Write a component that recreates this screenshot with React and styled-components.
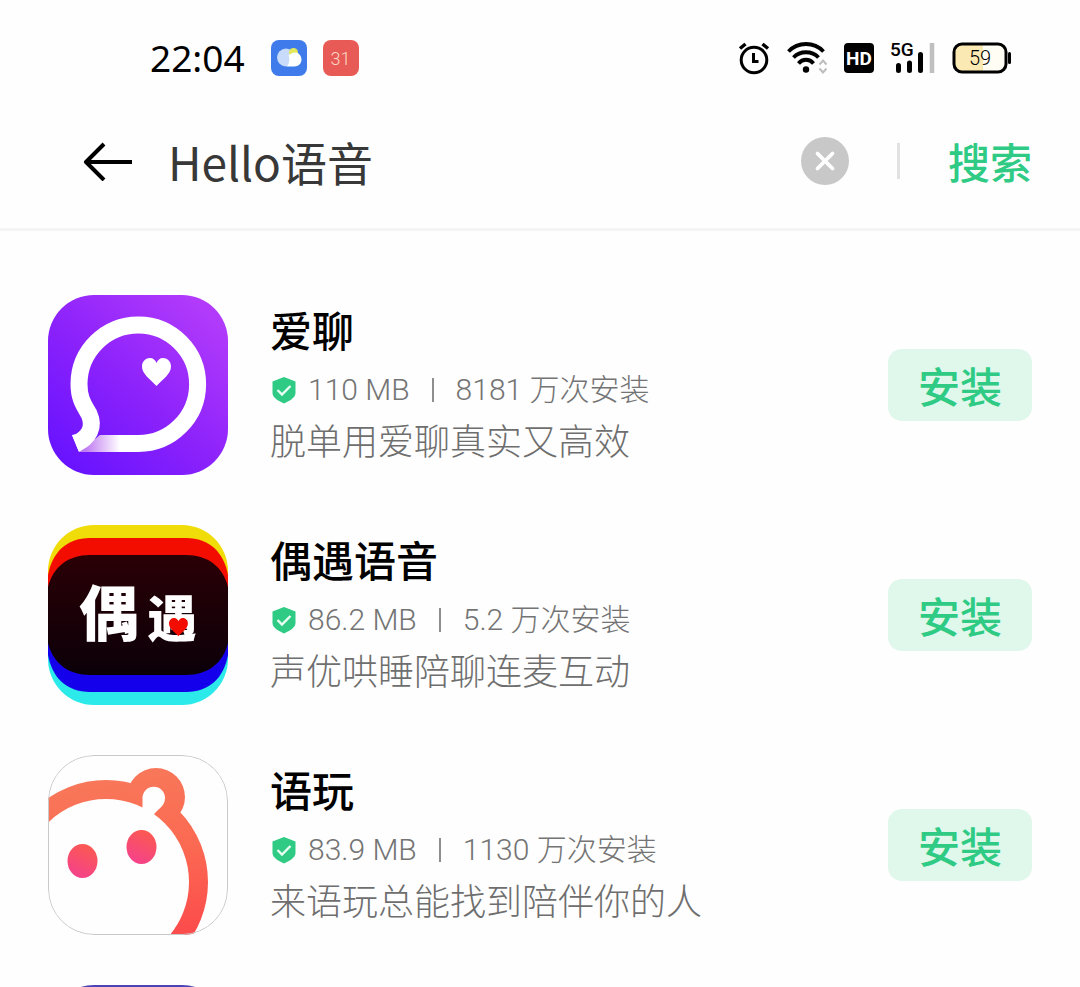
import React, { useState } from "react";
import styled, { createGlobalStyle } from "styled-components";

const GlobalStyle = createGlobalStyle`
*{
box-sizing:border-box;
}
body{
margin:0;
background-color:#fefefe;
font-family:Roboto, "Noto Sans CJK SC", sans-serif;
}
`

const Page = styled.div`
height:100vh;
overflow:hidden;
display:flex;
flex-direction:column;
`

const StatusBar = styled.div`
display:flex;
align-items:center;
justify-content:space-between;
flex-shrink:0;
height:116px;
padding:0 68px 0 150px;
`

const StatusGroup = styled.div`
display:flex;
align-items:center;
gap:${props => props.$gap}px;
`

const Clock = styled.span`
font-family:"Noto Sans", sans-serif;
font-size:37px;
line-height:44px;
color:#000;
margin-right:10px;
`

const Badge = styled.span`
display:flex;
align-items:center;
justify-content:center;
width:36px;
height:36px;
border-radius:8px;
background-color:${props => props.$color};
color:#fbd9c8;
font-size:18px;
font-weight:300;
`

const SearchBar = styled.form`
display:flex;
align-items:center;
flex-shrink:0;
height:115px;
padding:0 48px 22px 80px;
border-bottom:3px solid #f4f4f4;
`

const IconButton = styled.button`
display:flex;
flex-shrink:0;
padding:0;
border:0;
background:none;
`

const SearchInput = styled.input`
flex:1;
min-width:0;
height:72px;
margin-left:34px;
padding:0;
border:0;
outline:0;
background:none;
color:#383838;
font-family:"Noto Sans CJK SC", sans-serif;
font-size:46px;
`

const Divider = styled.span`
width:3px;
height:36px;
margin:0 48px;
background-color:#e2e2e2;
`

const SearchButton = styled.button`
padding:0;
border:0;
background:none;
color:#2fcb85;
font-family:"Noto Sans CJK SC", sans-serif;
font-size:42px;
font-weight:500;
line-height:60px;
`

const List = styled.ul`
display:flex;
flex-direction:column;
gap:50px;
margin:0;
padding:64px 48px 0;
list-style:none;
`

const Row = styled.li`
display:flex;
align-items:center;
flex-shrink:0;
height:180px;
`

const AppIcon = styled.svg`
flex-shrink:0;
width:180px;
height:180px;
border-radius:46px;
`

const Info = styled.div`
flex:1;
min-width:0;
margin-left:42px;
padding-top:2px;
`

const Name = styled.h2`
margin:0;
color:#000;
font-size:42px;
font-weight:500;
line-height:58px;
`

const Meta = styled.div`
display:flex;
align-items:center;
height:56px;
padding-left:2px;
color:#747474;
font-size:30px;
font-weight:300;
line-height:56px;
`

const Size = styled.span`
margin-left:12px;
`

const Bar = styled.span`
width:2px;
height:24px;
margin:0 22px;
background-color:#8e8e8e;
`

const Slogan = styled.p`
margin:0;
color:#6e6e6e;
font-size:36px;
font-weight:300;
line-height:50px;
`

const InstallButton = styled.button`
flex-shrink:0;
width:144px;
height:72px;
padding:0;
border:0;
border-radius:14px;
background-color:#e0f7eb;
color:#2fcb85;
font-family:"Noto Sans CJK SC", sans-serif;
font-size:42px;
font-weight:500;
line-height:72px;
`

const HEART = "M14.5 28C8 21 0 16 0 8.500C0 3 4 0 8 0C11 0 13.500 2 14.500 5C15.500 2 18 0 21 0C25 0 29 3 29 8.500C29 16 21 21 14.500 28Z"

const WeatherIcon = () => (
    <svg width="36" height="36" viewBox="0 0 36 36" aria-hidden="true">
        <circle cx="15" cy="17.500" r="9" fill="#c9dbfb" />
        <circle cx="22.500" cy="12.500" r="4.500" fill="#e3e95c" />
        <path d="M17.500 15C20 14 21 12.500 24 12.500C28 12.500 30.500 16 30.500 19.500C30.500 23.500 27.500 26.500 23.500 26.500H16C18.500 23 19 19 17.500 15Z" fill="#fdfefe" />
    </svg>
)

const AlarmIcon = () => (
    <svg width="32" height="34" viewBox="0 0 32 34" fill="none" stroke="#000" aria-hidden="true">
        <circle cx="16" cy="19" r="12.800" strokeWidth="3" />
        <path d="M15.500 12v8.500h5" strokeWidth="3" />
        <path d="M2 7.500L7.500 3M30 7.500L24.500 3" strokeWidth="3.500" />
    </svg>
)

const WifiIcon = () => (
    <svg width="40" height="32" viewBox="0 0 40 32" fill="none" stroke="#000" aria-hidden="true">
        <path d="M1.500 9.500C11-.5 27-.5 36.500 9.500" strokeWidth="3.800" />
        <path d="M6.500 15.500C13 8.500 25 8.500 31.500 15.500" strokeWidth="3.800" />
        <path d="M11.500 21.500C15.500 16.500 22.500 16.500 26.500 21.500" strokeWidth="3.800" />
        <circle cx="19" cy="27.500" r="3.200" fill="#000" stroke="none" />
        <path d="M32.500 22.500l3.500-4 3.500 4M32.500 26.500l3.500 4 3.500-4" stroke="#bdbdbd" strokeWidth="2" />
    </svg>
)

const HdIcon = () => (
    <svg width="30" height="30" viewBox="0 0 30 30" aria-hidden="true">
        <rect width="30" height="30" rx="4" fill="#000" />
        <text x="15" y="22" textAnchor="middle" fill="#fff" fontFamily="Roboto, sans-serif" fontSize="19" fontWeight="700">HD</text>
    </svg>
)

const SignalIcon = () => (
    <svg width="44" height="44" viewBox="0 -6 44 44" aria-hidden="true">
        <text x="-1" y="14" fontFamily="Roboto, sans-serif" fontSize="19" fontWeight="500">5G</text>
        <path d="M7.500 23.500v5M18.500 21v7.500M29.500 12.500v16" stroke="#000" strokeWidth="5" strokeLinecap="round" />
        <path d="M41 1v30" stroke="#bfbfbf" strokeWidth="4.500" />
    </svg>
)

const BatteryIcon = () => (
    <svg width="60" height="32" viewBox="0 0 60 32" aria-hidden="true">
        <rect x="2" y="2" width="52" height="28" rx="8" fill="#fffdf4" />
        <path d="M10 2H31V30H10A8 8 0 0 1 2 22V10A8 8 0 0 1 10 2Z" fill="#fbe9b4" />
        <rect x="2" y="2" width="52" height="28" rx="8" fill="none" stroke="#000" strokeWidth="3" />
        <path d="M57.500 11.500v9" stroke="#000" strokeWidth="3" strokeLinecap="round" />
        <text x="28" y="23" textAnchor="middle" fontFamily="Roboto, sans-serif" fontSize="20" fontWeight="300">59</text>
    </svg>
)

const BackIcon = () => (
    <svg width="54" height="40" viewBox="0 0 54 40" fill="none" stroke="#000" strokeWidth="4" aria-hidden="true">
        <path d="M52 21H6M24 3L6 21L24 39" strokeLinejoin="round" />
    </svg>
)

const ClearIcon = () => (
    <svg width="48" height="48" viewBox="0 0 48 48" aria-hidden="true">
        <circle cx="24" cy="24" r="24" fill="#c8c8c8" />
        <path d="M16.500 16.500l15 15M31.500 16.500l-15 15" stroke="#fff" strokeWidth="3.800" strokeLinecap="round" />
    </svg>
)

const ShieldIcon = () => (
    <svg width="24" height="28" viewBox="1 0 24 28" aria-hidden="true">
        <path d="M13 1L24.500 5.500V17C24.500 22 18 25 13 27.500C8 25 1.500 22 1.500 17V5.500Z" fill="#2fcb85" />
        <path d="M6.500 14l4.500 4.500 8.500-8.500" fill="none" stroke="#e9fff4" strokeWidth="2.400" />
    </svg>
)

const BubbleLogo = () => (
    <AppIcon viewBox="0 0 180 180" aria-hidden="true">
        <defs>
            <linearGradient id="violet" x1="0.1" y1="1" x2="0.9" y2="0.1">
                <stop offset="0" stopColor="#6512ff" />
                <stop offset="0.5" stopColor="#8c22fb" />
                <stop offset="1" stopColor="#b23bfb" />
            </linearGradient>
            <linearGradient id="fold" gradientUnits="userSpaceOnUse" x1="38" y1="0" x2="72" y2="0">
                <stop offset="0" stopColor="#c07df2" />
                <stop offset="1" stopColor="#fff" />
            </linearGradient>
        </defs>
        <rect width="180" height="180" fill="url(#violet)" />
        <path d="M31 157L52 140H90V157Z" fill="url(#fold)" />
        <path d="M72 148.500H90A59.300 59.300 0 1 0 31 89C31 104 36 110 41 119C47 132 41 143 27.500 148.500" fill="none" stroke="#fff" strokeWidth="17" />
        <path d="M24 140L31 157L40 151L34 138Z" fill="#fff" />
        <path d={HEART} fill="#fff" transform="translate(94 63)" />
    </AppIcon>
)

const StripeLogo = () => (
    <AppIcon viewBox="0 0 180 180" role="img" aria-label="偶遇">
        <defs>
            <linearGradient id="night" x1="0" y1="0" x2="0" y2="1">
                <stop offset="0" stopColor="#2a0006" />
                <stop offset="1" stopColor="#0b0008" />
            </linearGradient>
        </defs>
        <rect width="180" height="90" fill="#f0dc08" />
        <rect y="90" width="180" height="90" fill="#2deaea" />
        <path d="M0 90V50C4 28 18 13 42 13H138C162 13 176 28 180 50V90Z" fill="#f20d00" />
        <path d="M0 90V130C4 152 18 167 42 167H138C162 167 176 152 180 130V90Z" fill="#1400ea" />
        <path d="M0 62C5 42 20 30 42 30H138C160 30 175 42 180 62V118C175 138 160 150 138 150H42C20 150 5 138 0 118Z" fill="url(#night)" />
        <g fill="#fff" fontFamily='"Noto Sans CJK SC", sans-serif' fontWeight="900">
            <text x="31" y="111" fontSize="60">偶</text>
            <text x="99" y="112" fontSize="50">遇</text>
        </g>
        <path d={HEART} fill="#f20d00" transform="translate(121 93) scale(0.65)" />
    </AppIcon>
)

const BearLogo = () => (
    <AppIcon viewBox="0 0 180 180" aria-hidden="true">
        <defs>
            <linearGradient id="coral" gradientUnits="userSpaceOnUse" x1="90" y1="10" x2="120" y2="180">
                <stop offset="0" stopColor="#f8785a" />
                <stop offset="0.5" stopColor="#fb6a52" />
                <stop offset="1" stopColor="#fc4c4c" />
            </linearGradient>
            <linearGradient id="eye" x1="0.3" y1="1" x2="0.7" y2="0">
                <stop offset="0" stopColor="#f5418c" />
                <stop offset="1" stopColor="#fb5a50" />
            </linearGradient>
        </defs>
        <rect width="180" height="180" fill="#fefefe" />
        <circle cx="108" cy="42" r="29" fill="url(#coral)" />
        <circle cx="58" cy="127" r="92.500" fill="#fefefe" stroke="url(#coral)" strokeWidth="19" />
        <path d="M94.500 56V43A11.200 11.200 0 0 1 117 43C117 52 109 54 105 61Z" fill="#fefefe" />
        <ellipse cx="34.500" cy="106" rx="15" ry="17" fill="url(#eye)" />
        <ellipse cx="93.500" cy="92" rx="15" ry="17" fill="url(#eye)" />
        <rect x="0.500" y="0.500" width="179" height="179" rx="45.500" fill="none" stroke="#c9c9c9" />
    </AppIcon>
)

const IndigoLogo = () => (
    <AppIcon viewBox="0 0 180 180" aria-hidden="true">
        <rect width="180" height="180" fill="#4a43b5" />
    </AppIcon>
)

const apps = [
    { name: "爱聊", size: "110 MB", installs: "8181 万次安装", slogan: "脱单用爱聊真实又高效", Logo: BubbleLogo },
    { name: "偶遇语音", size: "86.2 MB", installs: "5.2 万次安装", slogan: "声优哄睡陪聊连麦互动", Logo: StripeLogo },
    { name: "语玩", size: "83.9 MB", installs: "1130 万次安装", slogan: "来语玩总能找到陪伴你的人", Logo: BearLogo },
]

const AppRow = ({ app }) => {
    const { Logo } = app
    return(
        <Row>
            <Logo />
            <Info>
                <Name>{app.name}</Name>
                <Meta>
                    <ShieldIcon />
                    <Size>{app.size}</Size>
                    <Bar />
                    <span>{app.installs}</span>
                </Meta>
                <Slogan>{app.slogan}</Slogan>
            </Info>
            <InstallButton type="button">安装</InstallButton>
        </Row>
    )
}

const App = () => {
    const [query, setQuery] = useState("Hello语音")

    return(
        <Page>
            <GlobalStyle />
            <StatusBar>
                <StatusGroup $gap={16}>
                    <Clock>22:04</Clock>
                    <Badge $color="#3f7bea"><WeatherIcon /></Badge>
                    <Badge $color="#e85a55">31</Badge>
                </StatusGroup>
                <StatusGroup $gap={17}>
                    <AlarmIcon />
                    <WifiIcon />
                    <HdIcon />
                    <SignalIcon />
                    <BatteryIcon />
                </StatusGroup>
            </StatusBar>
            <SearchBar onSubmit={e => e.preventDefault()}>
                <IconButton type="button" aria-label="返回"><BackIcon /></IconButton>
                <SearchInput aria-label="搜索" value={query} onChange={e => setQuery(e.target.value)} />
                <IconButton type="button" aria-label="清除" onClick={() => setQuery("")}><ClearIcon /></IconButton>
                <Divider />
                <SearchButton type="submit">搜索</SearchButton>
            </SearchBar>
            <List>
                {apps.map(app => <AppRow key={app.name} app={app} />)}
                <Row><IndigoLogo /></Row>
            </List>
        </Page>
    )
}

export default App
